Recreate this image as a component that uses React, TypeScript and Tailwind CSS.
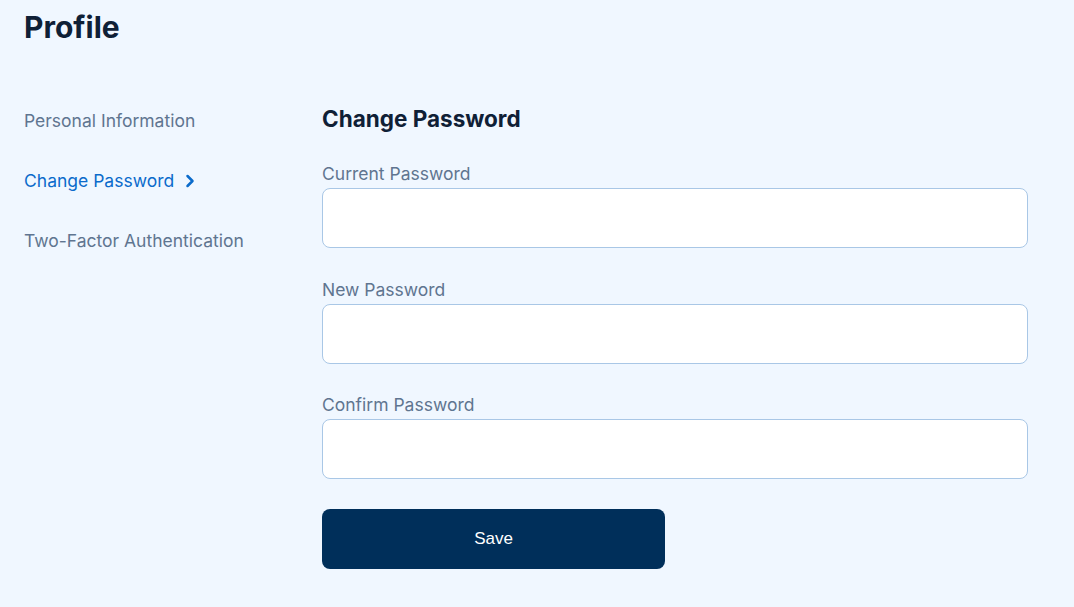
import { ChevronRight } from "lucide-react";

const Field = ({ label }: { label: string }) => (
  <div className="flex flex-col">
    <label className="text-[17.5px] leading-[24px] text-[#5f7590] mb-[2px]">{label}</label>
    <input
      type="password"
      className="h-[60px] w-full rounded-lg border border-[#a9c7e6] bg-white px-4 outline-none"
    />
  </div>
);

const App = () => {
  const navItems = ["Personal Information", "Change Password", "Two-Factor Authentication"];

  return (
    <div
      className="min-h-screen bg-[#f0f7ff] px-6 pt-[6px]"
      style={{ fontFamily: "Inter, 'Noto Sans', sans-serif" }}
    >
      <h1 className="text-[30px] leading-[42px] font-bold text-[#0f2036]">Profile</h1>

      <div className="mt-[60px] flex">
        {/* Side nav */}
        <nav className="w-[298px] shrink-0 flex flex-col gap-[36px] pt-[1px]">
          {navItems.map((item) => {
            const active = item === "Change Password";
            return (
              <div
                key={item}
                className={`flex items-center gap-[6px] text-[17.5px] leading-[24px] ${
                  active ? "text-[#0b6bcb]" : "text-[#5f7590]"
                }`}
              >
                {item}
                {active && <ChevronRight className="h-[20px] w-[20px]" strokeWidth={3} />}
              </div>
            );
          })}
        </nav>

        {/* Form */}
        <div className="w-[706px] flex flex-col">
          <h2 className="text-[22.5px] leading-[28px] font-bold text-[#0f2036] -mt-[3px]">Change Password</h2>
          <div className="mt-[29px] flex flex-col gap-[29.5px]">
            <Field label="Current Password" />
            <Field label="New Password" />
            <Field label="Confirm Password" />
          </div>
          <button
            className="mt-[30px] h-[60px] w-[343px] rounded-lg bg-[#002f5a] text-white text-[17px]"
            style={{ fontFamily: "'Liberation Sans', Arial, sans-serif" }}
          >
            Save
          </button>
        </div>
      </div>
    </div>
  );
};

export default App;
